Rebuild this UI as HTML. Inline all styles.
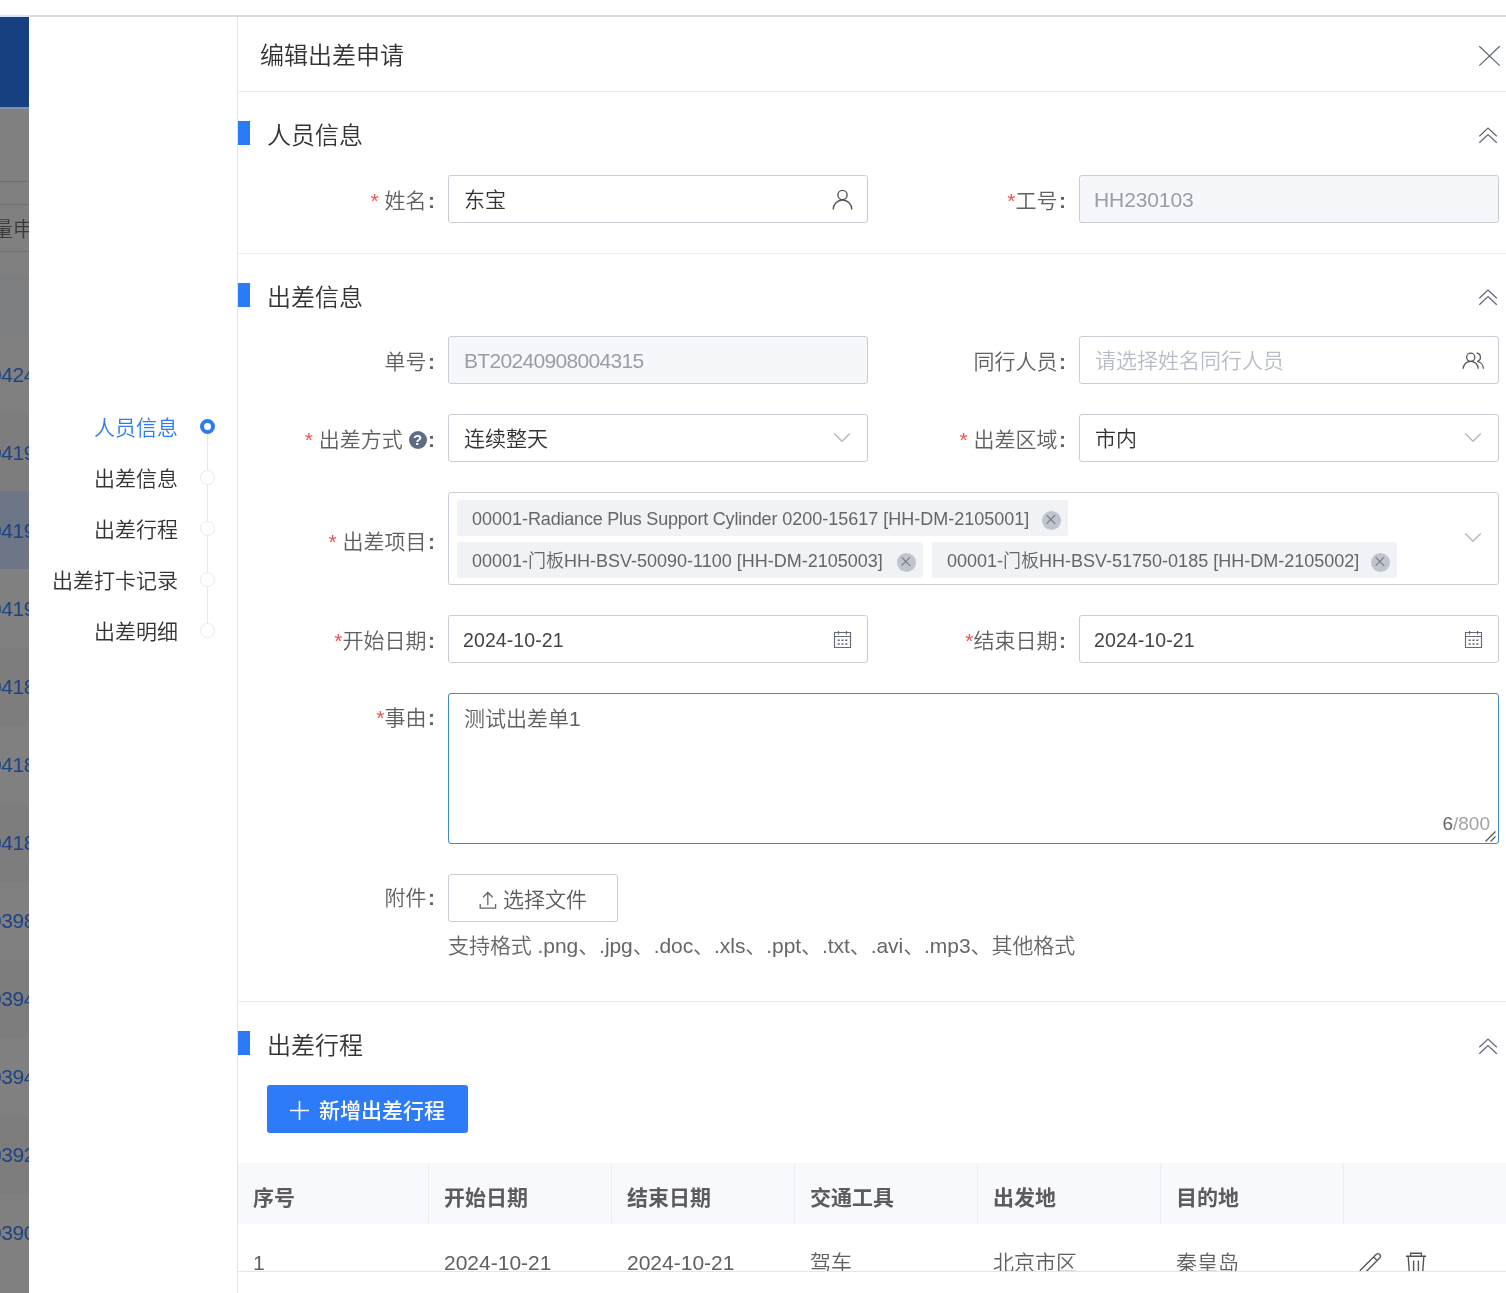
<!DOCTYPE html>
<html lang="zh-CN">
<head>
<meta charset="utf-8">
<title>编辑出差申请</title>
<style>
*{box-sizing:border-box;margin:0;padding:0}
html,body{width:1506px;height:1293px;overflow:hidden;background:#fff}
body{position:relative;font-family:"Liberation Sans","Noto Sans CJK SC",sans-serif;font-size:21px;color:#333;font-weight:350;-webkit-font-smoothing:antialiased}
#root{position:absolute;left:0;top:0;width:1506px;height:1293px;overflow:hidden;will-change:transform}
.abs{position:absolute}
#topline{left:0;top:15px;width:1506px;height:2px;background:#dcdcdc}
#topline i{position:absolute;left:0;top:0;width:29px;height:2px;background:#d6e6f6}
/* masked page strip */
#strip{left:0;top:17px;width:29px;height:1276px;background:#808080;overflow:hidden}
#strip .hd{position:absolute;left:0;top:0;width:29px;height:90px;background:#16407f}
#strip .ln{position:absolute;left:0;width:29px;height:1px;background:#6f6f6f}
#strip .num{position:absolute;left:-10px;width:60px;font-size:21px;line-height:26px;color:#1d4382;white-space:nowrap;letter-spacing:-.45px}

#strip .tx{position:absolute;left:-8px;width:60px;font-size:21px;line-height:30px;color:#3a3a3a;white-space:nowrap}
#strip .th{position:absolute;left:0;width:29px;background:#7c7e80}
#strip .alt{position:absolute;left:0;width:29px;height:78px;background:#7d7d7d}
#strip .cur{position:absolute;left:0;width:29px;height:78px;background:#6c7686}
/* drawer */
#drawer{left:29px;top:17px;width:1477px;height:1276px;background:#fff}
#navline{left:237px;top:17px;width:1px;height:1276px;background:#e6e6e6}
#hdline{left:238px;top:91px;width:1268px;height:1px;background:#ececec}
#title{left:260px;top:38px;font-size:24px;line-height:36px;color:#333}
.sec-line{left:238px;width:1268px;height:1px;background:#ececec}
.bar{left:238px;width:12px;height:24px;background:#2b7bf9}
.sec-t{left:267px;font-size:24px;line-height:36px;color:#333}
.lbl{font-size:21px;line-height:48px;color:#606060;text-align:right;white-space:nowrap}
.lbl b{font-weight:400;color:#f05050}
.lbl u{text-decoration:none;margin-left:1.5px;font-weight:700}
.inp{height:48px;width:420px;border:1.5px solid #c9cdd6;border-radius:3px;background:#fff;font-size:21px;line-height:48px;padding-left:15px;color:#333;white-space:nowrap}
.inp.dis{background:#f5f7fa;color:#9a9da3;letter-spacing:-.68px}
.inp.ph{color:#b8bcc4}
.inp.dt{font-size:19.5px;letter-spacing:.1px;color:#444;padding-left:14px}

.q{display:inline-block;width:18px;height:18px;border-radius:50%;background:#5f6b85;color:#fff;font-size:15px;line-height:18px;text-align:center;font-weight:700;vertical-align:2px}
.inp.ta{border-color:#4488cc;color:#606060;line-height:50px}
.inp.btn{color:#5a5a5a;padding-left:54px;line-height:50px}
.hint{font-size:21px;line-height:32px;color:#666;white-space:nowrap;letter-spacing:-.06px}

#anchorline{left:207px;top:426px;width:1px;height:205px;background:#e6e8ec}
.nav{left:29px;width:149px;text-align:right;font-size:21px;line-height:32px;color:#333;white-space:nowrap}
.nav.on{color:#2d7bf7}
.dot{left:200px;width:15px;height:15px;border-radius:50%;background:#fff;border:1.5px solid #e8eaee}
.dot.on{border:4.5px solid #2d7bf7}
svg.dbl{fill:none;stroke:#5f6773;stroke-width:1.25}
svg.ic{fill:none;stroke:#555;stroke-width:1.25}
svg.chev{fill:none;stroke:#b5b8be;stroke-width:1.4}
svg.cal{fill:none;stroke:#646a76;stroke-width:1.15}
svg.cal .d{stroke-width:1.4}
.tag{height:36px;border-radius:3px;background:#f0f2f5;color:#666;font-size:18px;line-height:39px;padding-left:15px;white-space:nowrap}
.tag span{letter-spacing:-.2px}
.tag i{position:absolute;right:7.5px;top:10.5px;width:19px;height:19px;border-radius:50%;background:#c0c4cc}
.tag i:before,.tag i:after{content:"";position:absolute;left:3.75px;top:8.9px;width:11.5px;height:1.2px;background:#70757e;transform:rotate(45deg)}
.tag i:after{transform:rotate(-45deg)}
.cnt{font-size:19px;line-height:24px;text-align:right;color:#666;white-space:nowrap}
.cnt em{font-style:normal;color:#a2a2a2}
.addbtn{width:201px;height:48px;border-radius:3px;background:#2d7bf7;color:#fff;font-size:21px;font-weight:500;line-height:51px;padding-left:52px;white-space:nowrap}
#thead{left:238px;top:1163px;width:1268px;height:61px;background:#f8f9fc}
#thead .th{position:absolute;top:0;width:183px;height:61px;border-right:1px solid #ebedf2;font-size:21px;font-weight:700;line-height:69px;padding-left:15px;color:#5c5c5c;white-space:nowrap}
#trow{left:238px;top:1224px;width:1268px;height:47px;overflow:hidden}
#trow .td{position:absolute;top:23px;font-size:21px;line-height:32px;padding-left:15px;color:#606060;white-space:nowrap}
#footer{left:238px;top:1271px;width:1268px;height:22px;background:#fff;border-top:1px solid #e6e6e6}
svg{position:absolute;overflow:visible}
</style>
</head>
<body>
<div id="root">
<div id="topline" class="abs"><i></i></div>

<!-- masked background page -->
<div id="strip" class="abs">
  <div class="hd"></div>
  <div class="ln" style="top:90px;height:1.5px;background:#868fa6"></div>
  <div class="ln" style="top:164px"></div>
  <div class="ln" style="top:187px"></div>
  <div class="ln" style="top:234px"></div>
  <div class="tx" style="top:197px">量申</div>
  <div class="th" style="top:258px;height:60px"></div>
  <div class="alt" style="top:396px"></div>
  <div class="alt" style="top:631px"></div>
  <div class="alt" style="top:787px"></div>
  <div class="alt" style="top:943px"></div>
  <div class="alt" style="top:1099px"></div>
  <div class="cur" style="top:474px"></div>
  <div class="num" style="top:345px">0424</div>
  <div class="num" style="top:423px">0419</div>
  <div class="num" style="top:501px">0419</div>
  <div class="num" style="top:579px">0419</div>
  <div class="num" style="top:657px">0418</div>
  <div class="num" style="top:735px">0418</div>
  <div class="num" style="top:813px">0418</div>
  <div class="num" style="top:891px">0398</div>
  <div class="num" style="top:969px">0394</div>
  <div class="num" style="top:1047px">0394</div>
  <div class="num" style="top:1125px">0392</div>
  <div class="num" style="top:1203px">0390</div>
</div>

<!-- drawer -->
<div id="drawer" class="abs"></div>
<div id="navline" class="abs"></div>
<div id="hdline" class="abs"></div>
<div id="title" class="abs">编辑出差申请</div>

<!-- SECTION 1 -->
<div class="abs bar" style="top:121px"></div>
<div class="abs sec-t" style="top:118px">人员信息</div>

<!-- row: name / job no -->
<div class="abs lbl" style="left:238px;width:197px;top:177px"><b>*</b> 姓名<u>:</u></div>
<div class="abs inp" style="left:448px;top:175px">东宝</div>
<svg style="left:830px;top:187px" width="24" height="24" viewBox="0 0 24 24" fill="none" stroke="#555" stroke-width="1.4"><circle cx="12.5" cy="8" r="4.6"/><path d="M3.2 22.6a9.3 9.6 0 0 1 18.6 0"/></svg>
<div class="abs lbl" style="left:869px;width:197px;top:177px"><b>*</b>工号<u>:</u></div>
<div class="abs inp dis" style="left:1079px;top:175px;letter-spacing:-.1px;padding-left:14px">HH230103</div>

<div class="abs sec-line" style="top:253px"></div>

<!-- SECTION 2 -->
<div class="abs bar" style="top:283px"></div>
<div class="abs sec-t" style="top:280px">出差信息</div>

<div class="abs lbl" style="left:238px;width:197px;top:338px">单号<u>:</u></div>
<div class="abs inp dis" style="left:448px;top:336px">BT20240908004315</div>
<div class="abs lbl" style="left:869px;width:197px;top:338px">同行人员<u>:</u></div>
<div class="abs inp ph" style="left:1079px;top:336px">请选择姓名同行人员</div>

<div class="abs lbl" style="left:238px;width:197px;top:416px"><b>*</b> 出差方式 <span class="q">?</span><u>:</u></div>
<div class="abs inp" style="left:448px;top:414px">连续整天</div>
<div class="abs lbl" style="left:869px;width:197px;top:416px"><b>*</b> 出差区域<u>:</u></div>
<div class="abs inp" style="left:1079px;top:414px">市内</div>

<div class="abs lbl" style="left:238px;width:197px;top:518px"><b>*</b> 出差项目<u>:</u></div>
<div class="abs inp" style="left:448px;top:492px;width:1051px;height:93px"></div>

<div class="abs lbl" style="left:238px;width:197px;top:617px"><b>*</b>开始日期<u>:</u></div>
<div class="abs inp dt" style="left:448px;top:615px">2024-10-21</div>
<div class="abs lbl" style="left:869px;width:197px;top:617px"><b>*</b>结束日期<u>:</u></div>
<div class="abs inp dt" style="left:1079px;top:615px">2024-10-21</div>

<div class="abs lbl" style="left:238px;width:197px;top:694px"><b>*</b>事由<u>:</u></div>
<div class="abs inp ta" style="left:448px;top:693px;width:1051px;height:151px">测试出差单1</div>

<div class="abs lbl" style="left:238px;width:197px;top:874px">附件<u>:</u></div>
<div class="abs inp btn" style="left:448px;top:874px;width:170px">选择文件</div>
<div class="abs hint" style="left:448px;top:930px">支持格式 .png、.jpg、.doc、.xls、.ppt、.txt、.avi、.mp3、其他格式</div>

<div class="abs sec-line" style="top:1001px"></div>

<!-- SECTION 3 -->
<div class="abs bar" style="top:1031px"></div>
<div class="abs sec-t" style="top:1028px">出差行程</div>

<!-- side anchor nav -->
<div class="abs" id="anchorline"></div>
<div class="abs nav on" style="top:412px">人员信息</div>
<div class="abs nav" style="top:463px">出差信息</div>
<div class="abs nav" style="top:514px">出差行程</div>
<div class="abs nav" style="top:565px">出差打卡记录</div>
<div class="abs nav" style="top:616px">出差明细</div>
<div class="abs dot on" style="top:419px"></div>
<div class="abs dot" style="top:470px"></div>
<div class="abs dot" style="top:521px"></div>
<div class="abs dot" style="top:572px"></div>
<div class="abs dot" style="top:623px"></div>

<!-- header icons -->
<svg style="left:1470px;top:36px" width="36" height="40" viewBox="0 0 36 40" fill="none" stroke="#5f6773" stroke-width="1.2"><path d="M9.3 10.2L29.7 29.6M29.7 10.2L9.3 29.6"/></svg>
<svg class="dbl" style="left:1470px;top:119px" width="36" height="32" viewBox="0 0 36 32"><path d="M9.3 17.2L18 9l8.8 8.2M9.3 23.8L18 15.6l8.8 8.2"/></svg>
<svg class="dbl" style="left:1470px;top:281px" width="36" height="32" viewBox="0 0 36 32"><path d="M9.3 17.2L18 9l8.8 8.2M9.3 23.8L18 15.6l8.8 8.2"/></svg>
<svg class="dbl" style="left:1470px;top:1030px" width="36" height="32" viewBox="0 0 36 32"><path d="M9.3 17.2L18 9l8.8 8.2M9.3 23.8L18 15.6l8.8 8.2"/></svg>

<!-- field icons -->
<svg class="ic" style="left:1459px;top:348px" width="28" height="24" viewBox="0 0 28 24"><circle cx="11.7" cy="9.3" r="4.1"/><path d="M4.2 20.7a7.5 7.4 0 0 1 15 0"/><path d="M17.6 5.2a4.1 4.1 0 0 1 0.6 8.1M18.6 13.7a7 7 0 0 1 5.8 7"/></svg>
<svg class="chev" style="left:833px;top:428px" width="18" height="18" viewBox="0 0 18 18"><path d="M1.2 5.4L9 13.2l7.8-7.8"/></svg>
<svg class="chev" style="left:1464px;top:428px" width="18" height="18" viewBox="0 0 18 18"><path d="M1.2 5.4L9 13.2l7.8-7.8"/></svg>
<svg class="chev" style="left:1464px;top:528px" width="18" height="18" viewBox="0 0 18 18"><path d="M1.2 5.4L9 13.2l7.8-7.8"/></svg>
<svg class="cal" style="left:832px;top:629px" width="22" height="22" viewBox="0 0 22 22"><path d="M2.5 3.5h16v15h-16zM2.5 7.5h16M6.5 2v3.5M14.5 2v3.5"/><path class="d" d="M5.6 11.2h2.2M9.4 11.2h2.2M13.2 11.2h2.2M5.6 15h2.2M9.4 15h2.2M13.2 15h2.2"/></svg>
<svg class="cal" style="left:1463px;top:629px" width="22" height="22" viewBox="0 0 22 22"><path d="M2.5 3.5h16v15h-16zM2.5 7.5h16M6.5 2v3.5M14.5 2v3.5"/><path class="d" d="M5.6 11.2h2.2M9.4 11.2h2.2M13.2 11.2h2.2M5.6 15h2.2M9.4 15h2.2M13.2 15h2.2"/></svg>

<!-- project tags -->
<div class="abs tag" style="left:457px;top:500px;width:611px">00001-<span>Radiance Plus Support Cylinder</span> 0200-15617 [HH-DM-2105001]<i></i></div>
<div class="abs tag" style="left:457px;top:542px;width:466px">00001-门板HH-BSV-50090-1100 [HH-DM-2105003]<i></i></div>
<div class="abs tag" style="left:932px;top:542px;width:465px">00001-门板HH-BSV-51750-0185 [HH-DM-2105002]<i></i></div>

<!-- textarea counter + resize grip -->
<div class="abs cnt" style="left:1401px;top:812px;width:89px">6<em>/800</em></div>
<svg style="left:1484px;top:830px" width="14" height="14" viewBox="0 0 14 14" fill="none" stroke="#555" stroke-width="1.2"><path d="M1.5 11.5L11.5 1.5M6.5 11.5l5-5"/></svg>

<!-- upload icon -->
<svg style="left:478px;top:890px" width="20" height="20" viewBox="0 0 20 20" fill="none" stroke="#666" stroke-width="1.3"><path d="M9.8 15V2.6M5 7.2l4.8-4.7 4.8 4.7M2.2 14v4.2h15.4V14"/></svg>

<!-- add button -->
<div class="abs addbtn" style="left:267px;top:1085px">新增出差行程</div>
<svg style="left:289px;top:1100px" width="22" height="22" viewBox="0 0 22 22" fill="none" stroke="#fff" stroke-width="1.6"><path d="M1 10.5h19M10.5 1v19"/></svg>

<!-- table -->
<div class="abs" id="thead">
  <div class="th" style="left:0;width:191px">序号</div>
  <div class="th" style="left:191px">开始日期</div>
  <div class="th" style="left:374px">结束日期</div>
  <div class="th" style="left:557px">交通工具</div>
  <div class="th" style="left:740px">出发地</div>
  <div class="th" style="left:923px">目的地</div>
  <div class="th" style="left:1106px;border-right:0"></div>
</div>
<div class="abs" id="trow">
  <div class="td" style="left:0">1</div>
  <div class="td" style="left:191px">2024-10-21</div>
  <div class="td" style="left:374px">2024-10-21</div>
  <div class="td" style="left:557px">驾车</div>
  <div class="td" style="left:740px">北京市区</div>
  <div class="td" style="left:923px">秦皇岛</div>
  <svg style="left:1100px;top:0" width="60" height="60" viewBox="0 0 60 60" fill="none" stroke="#555" stroke-width="1.35" stroke-linejoin="round"><g transform="translate(39.9 32.3) rotate(45)"><path d="M-2.5 0A2.5 2.5 0 0 1 2.5 0V22L1 26.5H-1L-2.5 22ZM-2.5 3.6H2.5"/></g></svg>
  <svg style="left:1166px;top:26.8px" width="24" height="28" viewBox="0 0 24 28" fill="none" stroke="#555" stroke-width="1.4"><path d="M2 5.2h20M6.6 5.2V2.2h10.8v3M4.2 5.6l1.4 19.2h12.8l1.4-19.2M9.6 9.4v12.6M14.4 9.4v12.6"/></svg>
</div>

<!-- footer -->
<div class="abs" id="footer"></div>

</div>
</body>
</html>
